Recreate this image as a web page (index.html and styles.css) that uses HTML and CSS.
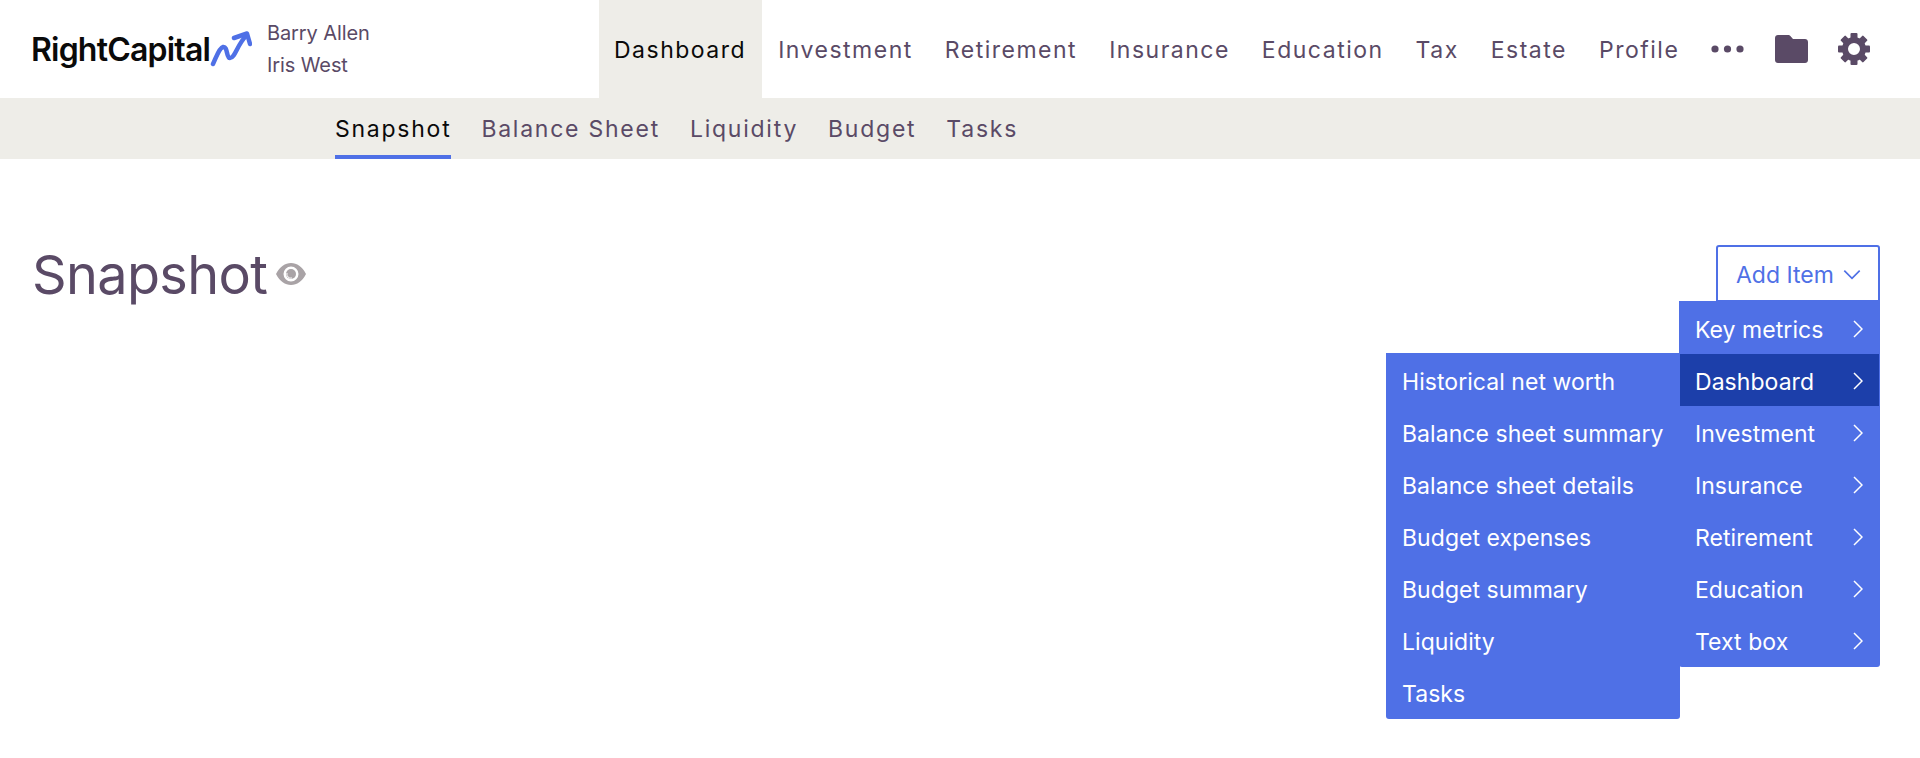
FILE: index.html
```html
<!DOCTYPE html>
<html lang="en">
<head>
<meta charset="utf-8">
<title>Snapshot</title>
<link rel="stylesheet" href="styles.css">
</head>
<body>
<header class="topbar">
  <div class="brand">
    <span class="logo-text">RightCapital</span>
    <svg class="logo-mark" viewBox="0 0 42 38" aria-hidden="true"><path d="M3 35 C6 29 9 19 13 18 C18 17 16 29 20 29 C25 29 27 16 36 7" fill="none" stroke="#4f70e6" stroke-width="4.500" stroke-linecap="round"/><path d="M24 9 L37 4.500 L40 15" fill="none" stroke="#4f70e6" stroke-width="4.500" stroke-linecap="round" stroke-linejoin="round"/></svg>
  </div>
  <div class="clients"><span>Barry Allen</span><span>Iris West</span></div>
  <nav class="mainnav">
    <a class="tab active">Dashboard</a>
    <a class="tab">Investment</a>
    <a class="tab">Retirement</a>
    <a class="tab">Insurance</a>
    <a class="tab">Education</a>
    <a class="tab">Tax</a>
    <a class="tab">Estate</a>
    <a class="tab">Profile</a>
  </nav>
  <div class="tools">
    <svg class="ico-more" viewBox="0 0 33 8" aria-hidden="true"><circle cx="4" cy="4" r="3.600"/><circle cx="16.500" cy="4" r="3.600"/><circle cx="29" cy="4" r="3.600"/></svg>
    <svg class="ico-folder" viewBox="0 0 33 28" aria-hidden="true"><path d="M3 0 H13 C14 0 15 .5 15.600 1.200 L18 4 H30 C31.700 4 33 5.300 33 7 V25 C33 26.700 31.700 28 30 28 H3 C1.300 28 0 26.700 0 25 V3 C0 1.300 1.300 0 3 0 Z"/></svg>
    <svg class="ico-gear" viewBox="0 0 32 32" aria-hidden="true">
      <circle class="gear-ring" cx="16" cy="16" r="9"/>
      <rect x="12.500" y="0" width="7" height="7" rx="1"/>
      <rect x="12.500" y="0" width="7" height="7" rx="1" transform="rotate(45 16 16)"/>
      <rect x="12.500" y="0" width="7" height="7" rx="1" transform="rotate(90 16 16)"/>
      <rect x="12.500" y="0" width="7" height="7" rx="1" transform="rotate(135 16 16)"/>
      <rect x="12.500" y="0" width="7" height="7" rx="1" transform="rotate(180 16 16)"/>
      <rect x="12.500" y="0" width="7" height="7" rx="1" transform="rotate(225 16 16)"/>
      <rect x="12.500" y="0" width="7" height="7" rx="1" transform="rotate(270 16 16)"/>
      <rect x="12.500" y="0" width="7" height="7" rx="1" transform="rotate(315 16 16)"/>
    </svg>
  </div>
</header>
<nav class="subnav">
  <a class="subtab active">Snapshot</a>
  <a class="subtab">Balance Sheet</a>
  <a class="subtab">Liquidity</a>
  <a class="subtab">Budget</a>
  <a class="subtab">Tasks</a>
</nav>
<main class="content">
  <div class="title-wrap">
    <h1 class="title">Snapshot</h1>
    <svg class="ico-eye" viewBox="0 0 30 22" aria-hidden="true"><path fill-rule="evenodd" d="M0 11 C4 3.500 9 0 15 0 C21 0 26 3.500 30 11 C26 18.500 21 22 15 22 C9 22 4 18.500 0 11 Z M15 3.500 A7.500 7.500 0 1 0 15 18.500 A7.500 7.500 0 1 0 15 3.500 Z"/><circle cx="15" cy="11" r="5"/><path d="M11 10 A4 4 0 0 0 16 15" fill="none" stroke="#fff" stroke-width="1"/></svg>
  </div>
  <div class="add-wrap">
    <button class="add-btn">Add Item<svg class="chev-down" viewBox="0 0 16 10" aria-hidden="true"><path d="M1 1.500 L8 8.500 L15 1.500" fill="none" stroke="#4f70e6" stroke-width="1.500"/></svg></button>
    <ul class="menu menu-main">
      <li class="menu-item">Key metrics<svg class="chev" viewBox="0 0 10 18" aria-hidden="true"><path d="M1 1 L9 9 L1 17"/></svg></li>
      <li class="menu-item current">Dashboard<svg class="chev" viewBox="0 0 10 18" aria-hidden="true"><path d="M1 1 L9 9 L1 17"/></svg></li>
      <li class="menu-item">Investment<svg class="chev" viewBox="0 0 10 18" aria-hidden="true"><path d="M1 1 L9 9 L1 17"/></svg></li>
      <li class="menu-item">Insurance<svg class="chev" viewBox="0 0 10 18" aria-hidden="true"><path d="M1 1 L9 9 L1 17"/></svg></li>
      <li class="menu-item">Retirement<svg class="chev" viewBox="0 0 10 18" aria-hidden="true"><path d="M1 1 L9 9 L1 17"/></svg></li>
      <li class="menu-item">Education<svg class="chev" viewBox="0 0 10 18" aria-hidden="true"><path d="M1 1 L9 9 L1 17"/></svg></li>
      <li class="menu-item">Text box<svg class="chev" viewBox="0 0 10 18" aria-hidden="true"><path d="M1 1 L9 9 L1 17"/></svg></li>
    </ul>
    <ul class="menu menu-sub">
      <li class="menu-item">Historical net worth</li>
      <li class="menu-item">Balance sheet summary</li>
      <li class="menu-item">Balance sheet details</li>
      <li class="menu-item">Budget expenses</li>
      <li class="menu-item">Budget summary</li>
      <li class="menu-item">Liquidity</li>
      <li class="menu-item">Tasks</li>
    </ul>
  </div>
</main>
</body>
</html>
```
FILE: styles.css
```css
* { box-sizing: border-box; }
html, body { margin: 0; height: 100%; }
body { background: #fff; color: #5a4a66; font-family: Inter, "Liberation Sans", sans-serif; overflow: hidden; }
.topbar { height: 98px; display: flex; align-items: stretch; padding-left: 31px; }
.brand { width: 236px; display: flex; align-items: center; }
.logo-text { width: 180px; font-size: 32px; font-weight: 600; letter-spacing: -.8px; color: #0a0a0a; white-space: nowrap; }
.logo-mark { width: 42px; height: 38px; margin-top: -2px; margin-left: -1px; }
.clients { width: 332px; display: flex; flex-direction: column; justify-content: center; gap: 8px; font-size: 20px; line-height: 24px; letter-spacing: -.1px; }
.mainnav { display: flex; }
.tab { display: flex; align-items: center; padding: 2px 16px 0; font-size: 23px; letter-spacing: 1.5px; white-space: nowrap; }
.tab.active { background: #eeede8; color: #0a0a0a; padding-left: 15px; }
.tools { margin-left: 16px; display: flex; align-items: center; }
.ico-more { width: 33px; height: 8px; fill: #5a4a66; }
.ico-folder { width: 33px; height: 28px; fill: #5a4a66; margin-left: 31px; }
.ico-gear { width: 32px; height: 32px; fill: #5a4a66; margin-left: 30px; }
.gear-ring { fill: none; stroke: #5a4a66; stroke-width: 6; }
.subnav { height: 61px; background: #eeede8; display: flex; gap: 30px; padding-left: 335px; }
.subtab { display: flex; align-items: center; height: 100%; font-size: 23px; letter-spacing: 1.75px; border-bottom: 4px solid transparent; padding-top: 4px; }
.subtab.active { color: #0a0a0a; border-bottom-color: #4f70e6; }
.content { display: flex; justify-content: space-between; align-items: flex-start; padding: 86px 40px 0 32px; }
.title-wrap { display: flex; align-items: center; gap: 9px; }
.title { margin: 0; font-size: 54px; line-height: 60px; font-weight: 400; letter-spacing: -.65px; }
.ico-eye { width: 30px; height: 22px; fill: #a9a3a6; margin-top: -2px; }
.add-wrap { position: relative; }
.add-btn { width: 164px; height: 57px; display: flex; align-items: center; gap: 9px; padding: 2px 0 0 18px; background: #fff; border: 2px solid #4f70e6; border-radius: 3px 3px 0 0; color: #4f70e6; font: inherit; font-size: 23px; }
.chev-down { width: 18px; height: 11px; }
.menu { position: absolute; margin: 0; padding: 0; list-style: none; background: #4f70e6; color: #fff; border-radius: 0 0 3px 3px; }
.menu-main { top: 56px; right: 0; width: 201px; padding: 1px; }
.menu-main .menu-item { padding-left: 15px; }
.menu-sub { top: 108px; right: 200px; width: 294px; padding: 1px 0; }
.menu-item { height: 52px; display: flex; align-items: center; justify-content: space-between; padding: 3px 16px 0; font-size: 23px; letter-spacing: .05px; white-space: nowrap; }
.menu-item.current { background: #1c3faa; }
.chev { width: 10px; height: 18px; fill: none; stroke: #fff; stroke-width: 1.500; margin-top: -2px; }
```
